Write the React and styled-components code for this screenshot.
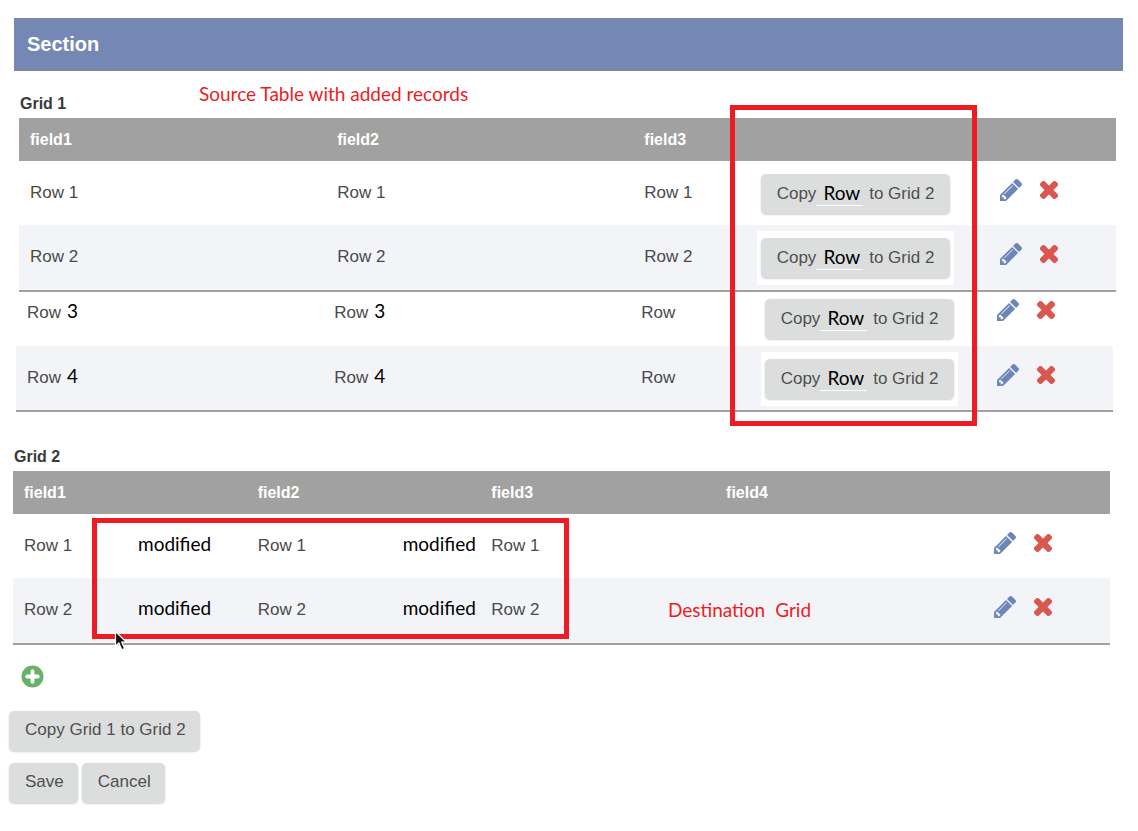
import React from "react";
import styled, { createGlobalStyle } from "styled-components";

const GlobalStyle = createGlobalStyle`
  * { box-sizing: border-box; }
  body {
    margin: 0;
    background: #ffffff;
    color: #4a4a4a;
    font: 17px/20px "Liberation Sans", Arial, sans-serif;
  }
`;

const noteFont = `"Lato", Calibri, sans-serif`;

const Page = styled.main`
  padding: 18px 15px 24px 14px;
`;

const SectionBar = styled.h1`
  margin: 0;
  padding: 15px 13px 16px;
  border: 1px solid #7d879c;
  border-width: 1px 0;
  background: #7588b5;
  color: #ffffff;
  font-size: 20px;
  line-height: 20px;
`;

const GridSection = styled.section`
  margin: ${(p) => (p.$second ? "32px 13px 0 -1px" : "0 7px 0 5px")};
`;

const GridHead = styled.div`
  display: flex;
  align-items: flex-start;
  height: ${(p) => (p.$tall ? "47px" : "27px")};
  padding-top: ${(p) => (p.$tall ? "13px" : "0")};
`;

const GridTitle = styled.h2`
  width: 180px;
  margin: 0;
  padding: ${(p) => (p.$low ? "10px 0 0 1px" : "3px 0 0 1px")};
  color: #3a3a3a;
  font-size: 16px;
  line-height: 20px;
`;

const Note = styled.span`
  color: ${(p) => (p.$red ? "#ed1c24" : "#000000")};
  font-family: ${noteFont};
  font-size: 19px;
  line-height: 20px;
  white-space: nowrap;
`;

const CellNote = styled(Note)`
  line-height: 0;
`;

const TableArea = styled.div`
  position: relative;
`;

const Table = styled.table`
  width: 100%;
  table-layout: fixed;
  border-collapse: separate;
  border-spacing: 0;
  border-bottom: 2px solid #a1a1a1;
`;

const ContinuedTable = styled(Table)`
  position: relative;
  left: -3px;
`;

const Col = styled.col`
  width: ${(p) => p.$w};
`;

const HeadCell = styled.th`
  height: 43px;
  padding: 0 11px;
  background: #a1a1a1;
  color: #ffffff;
  font-size: 16px;
  text-align: left;
`;

const Row = styled.tr`
  height: ${(p) => (p.$compact ? "54px" : p.$tall ? "65px" : "64px")};
  background: ${(p) => (p.$striped ? "#f3f4f8" : "#ffffff")};
  --lead: ${(p) => (p.$compact ? "11px" : "22px")};
  --icon-lead: ${(p) => (p.$compact ? "7px" : "18px")};
  --button-lead: ${(p) => (p.$compact ? "0" : "6px")};
`;

const Cell = styled.td`
  padding: var(--lead) 0 0 11px;
  vertical-align: top;
  white-space: nowrap;
`;

const ButtonCell = styled.td`
  padding: var(--button-lead) 0 0 ${(p) => (p.$shifted ? "13px" : "6px")};
  vertical-align: top;
`;

const ActionCell = styled.td`
  padding: var(--icon-lead) 0 0 10px;
  vertical-align: top;
`;

const Value = styled.span`
  display: inline-block;
  min-width: ${(p) => p.$w || "0"};
  margin-right: ${(p) => (p.$w ? "0" : "6px")};
`;

const ButtonPatch = styled.div`
  display: inline-flex;
  padding: 7px 4px;
  background: #ffffff;
  vertical-align: top;
`;

const Button = styled.button`
  height: 40px;
  padding: 0 14px 2px 16px;
  border: 0;
  border-radius: 5px;
  background: #dcdedd;
  box-shadow: 0 1px 2px #d0d2d1;
  color: #4f4f4f;
  font: 17px/20px "Liberation Sans", Arial, sans-serif;
  white-space: nowrap;
`;

const CopyButton = styled(Button)`
  display: flex;
  align-items: center;
  padding: 0 16px;
`;

const ButtonNote = styled(Note)`
  margin-right: 6px;
  padding: 0 3px 2px 7px;
  border-bottom: 1px solid #ffffff;
`;

const Actions = styled.div`
  display: flex;
  align-items: center;
  gap: 18px;
`;

const IconButton = styled.button`
  display: flex;
  padding: 0;
  border: 0;
  background: none;
`;

const Highlight = styled.div`
  position: absolute;
  top: ${(p) => p.$top};
  bottom: ${(p) => p.$bottom};
  left: ${(p) => p.$left};
  width: ${(p) => p.$width};
  border: 5px solid #ed1c24;
  pointer-events: none;
`;

const FloatingNote = styled.div`
  position: absolute;
  left: 59.7%;
  bottom: 25px;
  display: flex;
  gap: 10px;
`;

const Pointer = styled.svg`
  position: absolute;
  left: 9.2%;
  bottom: -7px;
`;

const AddLine = styled.div`
  padding: 20px 7px 23px;
`;

const ButtonStack = styled.div`
  display: flex;
  flex-direction: column;
  gap: 12px;
  margin-left: -5px;
`;

const ButtonLine = styled.div`
  display: flex;
  gap: 4px;
`;

function PencilIcon() {
  return (
    <svg width="22" height="22" viewBox="0 149 1515 1515" aria-hidden="true">
      <path
        fill="#6c86b8"
        d="M363 1536l91-91-235-235-91 91v107h128v128h107zM886 608q0-22-22-22-10 0-17 7l-542 542q-7 7-7 17 0 22 22 22 10 0 17-7l542-542q7-7 7-17zM832 416l416 416-832 832h-416v-416zM1515 512q0 53-37 90l-166 166-416-416 166-165q36-38 90-38 53 0 91 38l235 234q37 39 37 91z"
      />
    </svg>
  );
}

function CrossIcon() {
  return (
    <svg width="18" height="18" viewBox="302 366 1188 1188" aria-hidden="true">
      <path
        fill="#d9574f"
        stroke="#d9574f"
        strokeWidth="50"
        d="M1490 1322q0 40-28 68l-136 136q-28 28-68 28t-68-28l-294-294-294 294q-28 28-68 28t-68-28l-136-136q-28-28-28-68t28-68l294-294-294-294q-28-28-28-68t28-68l136-136q28-28 68-28t68 28l294 294 294-294q28-28 68-28t68 28l136 136q28 28 28 68t-28 68l-294 294 294 294q28 28 28 68z"
      />
    </svg>
  );
}

function RowActions() {
  return (
    <ActionCell>
      <Actions>
        <IconButton type="button" aria-label="Edit row"><PencilIcon /></IconButton>
        <IconButton type="button" aria-label="Delete row"><CrossIcon /></IconButton>
      </Actions>
    </ActionCell>
  );
}

function CopyCell({ shifted }) {
  return (
    <ButtonCell $shifted={shifted}>
      <ButtonPatch>
        <CopyButton type="button">
          Copy<ButtonNote>Row</ButtonNote>to Grid 2
        </CopyButton>
      </ButtonPatch>
    </ButtonCell>
  );
}

function SourceColumns() {
  return (
    <colgroup>
      <Col $w="28%" />
      <Col $w="28%" />
      <Col $w="10.7%" />
      <Col $w="21.8%" />
      <Col $w="11.5%" />
    </colgroup>
  );
}

export default function App() {
  return (
    <Page>
      <GlobalStyle />
      <SectionBar>Section</SectionBar>

      <GridSection>
        <GridHead $tall>
          <GridTitle $low>Grid 1</GridTitle>
          <Note $red>Source Table with added records</Note>
        </GridHead>
        <TableArea>
          <Table>
            <SourceColumns />
            <thead>
              <tr>
                <HeadCell>field1</HeadCell>
                <HeadCell>field2</HeadCell>
                <HeadCell>field3</HeadCell>
                <HeadCell />
                <HeadCell />
              </tr>
            </thead>
            <tbody>
              {["Row 1", "Row 2"].map((name, i) => (
                <Row key={name} $striped={i === 1} $tall={i === 1}>
                  <Cell>{name}</Cell>
                  <Cell>{name}</Cell>
                  <Cell>{name}</Cell>
                  <CopyCell />
                  <RowActions />
                </Row>
              ))}
            </tbody>
          </Table>
          <ContinuedTable>
            <SourceColumns />
            <tbody>
              {["3", "4"].map((num, i) => (
                <Row key={num} $striped={i === 1} $compact={i === 0}>
                  <Cell><Value>Row</Value><CellNote>{num}</CellNote></Cell>
                  <Cell><Value>Row</Value><CellNote>{num}</CellNote></Cell>
                  <Cell>Row</Cell>
                  <CopyCell shifted />
                  <RowActions />
                </Row>
              ))}
            </tbody>
          </ContinuedTable>
          <Highlight $top="-13px" $bottom="-14px" $left="64.8%" $width="22.5%" />
        </TableArea>
      </GridSection>

      <GridSection $second>
        <GridHead>
          <GridTitle>Grid 2</GridTitle>
        </GridHead>
        <TableArea>
          <Table>
            <colgroup>
              <Col $w="21.3%" />
              <Col $w="21.3%" />
              <Col $w="21.4%" />
              <Col $w="24.5%" />
              <Col $w="11.5%" />
            </colgroup>
            <thead>
              <tr>
                <HeadCell>field1</HeadCell>
                <HeadCell>field2</HeadCell>
                <HeadCell>field3</HeadCell>
                <HeadCell>field4</HeadCell>
                <HeadCell />
              </tr>
            </thead>
            <tbody>
              {["Row 1", "Row 2"].map((name, i) => (
                <Row key={name} $striped={i === 1} $tall={i === 1}>
                  <Cell><Value $w="114px">{name}</Value><CellNote>modified</CellNote></Cell>
                  <Cell><Value $w="145px">{name}</Value><CellNote>modified</CellNote></Cell>
                  <Cell>{name}</Cell>
                  <Cell />
                  <RowActions />
                </Row>
              ))}
            </tbody>
          </Table>
          <Highlight $top="47px" $bottom="6px" $left="7.2%" $width="43.5%" />
          <FloatingNote>
            <Note $red>Destination</Note>
            <Note $red>Grid</Note>
          </FloatingNote>
          <Pointer width="15" height="22" viewBox="0 0 15 22" aria-hidden="true">
            <path
              d="M1.5 1.5V16l3.4-3 2.9 6.8 2.8-1.2-2.9-6.5h4.6z"
              fill="#111111"
              stroke="#ffffff"
              strokeWidth="1.2"
            />
          </Pointer>
        </TableArea>
      </GridSection>

      <AddLine>
        <IconButton type="button" aria-label="Add row">
          <svg width="23" height="23" viewBox="0 0 23 23" aria-hidden="true">
            <circle cx="11.5" cy="11.5" r="11" fill="#67b168" />
            <path
              d="M11.5 6.2v10.6M6.2 11.5h10.6"
              stroke="#ffffff"
              strokeWidth="3.8"
              strokeLinecap="round"
            />
          </svg>
        </IconButton>
      </AddLine>

      <ButtonStack>
        <ButtonLine><Button type="button">Copy Grid 1 to Grid 2</Button></ButtonLine>
        <ButtonLine>
          <Button type="button">Save</Button>
          <Button type="button">Cancel</Button>
        </ButtonLine>
      </ButtonStack>
    </Page>
  );
}
